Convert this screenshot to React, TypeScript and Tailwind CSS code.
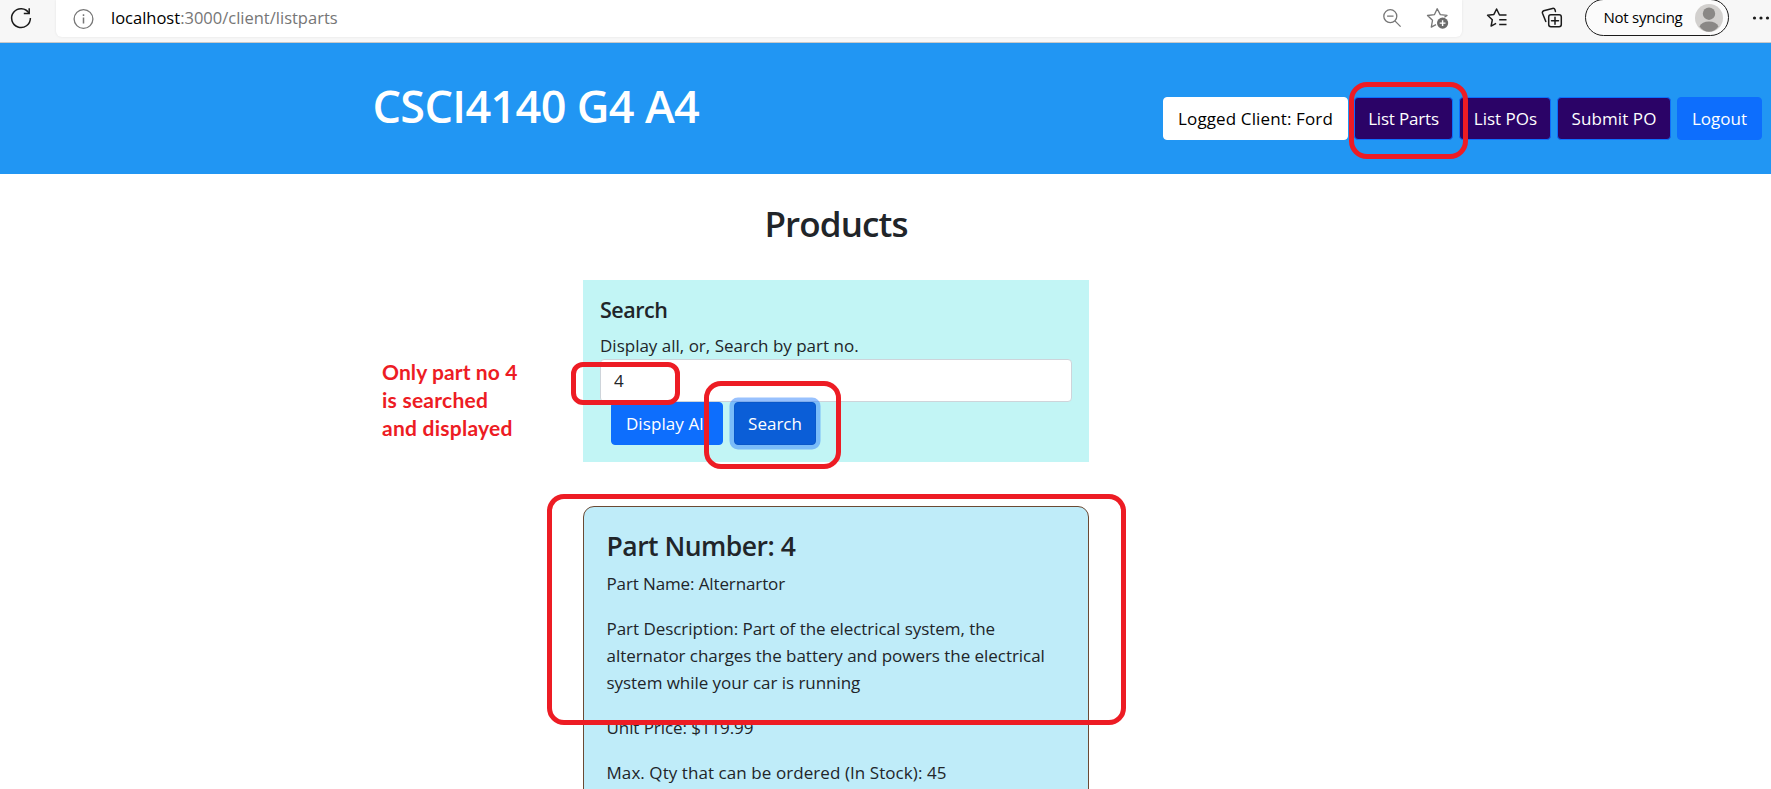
import type { ReactNode } from "react";

function RefreshIcon() {
  return (
    <svg width="24" height="24" viewBox="0 0 24 24" fill="none" stroke="#1b1b1b" strokeWidth="1.5" className="shrink-0">
      <path d="M20 7.2A9.4 9.4 0 1 0 21.4 12" />
      <path d="M20.2 2.2v5.2h-5.4" />
    </svg>
  );
}
function InfoIcon() {
  return (
    <svg width="22" height="22" viewBox="0 0 22 22" fill="none" stroke="#767676" strokeWidth="1.3" className="shrink-0">
      <circle cx="11.5" cy="11" r="9.4" />
      <path d="M11.5 9.6v6M11.5 6.3v1.6" strokeWidth="1.5" />
    </svg>
  );
}
function ZoomOutIcon() {
  return (
    <svg width="20" height="20" viewBox="0 0 20 20" fill="none" stroke="#767676" strokeWidth="1.3" className="shrink-0">
      <circle cx="7.3" cy="7.2" r="6.5" />
      <path d="M4.1 7.2h6.4M11.9 11.9l5.7 5.7" />
    </svg>
  );
}
function AddFavoriteIcon() {
  return (
    <svg width="24" height="24" viewBox="0 0 24 24" fill="none" stroke="#767676" strokeWidth="1.3" strokeLinejoin="round" className="shrink-0">
      <path d="M18.4 10.3l2.6-1.9-6.7-.8L11.2 1.7 8.5 7.6l-7 .9 5 4.8-1.2 6.8 4.7-2.5" />
      <circle cx="16.6" cy="16.1" r="5.6" fill="#6b6b6b" stroke="none" />
      <path d="M16.6 13.2v5.8M13.7 16.1h5.8" stroke="#fff" strokeWidth="1.4" />
    </svg>
  );
}
function FavoritesIcon() {
  return (
    <svg width="22" height="22" viewBox="0 0 22 22" fill="none" stroke="#1b1b1b" strokeWidth="1.5" strokeLinejoin="round" className="shrink-0">
      <path d="M20.5 8h-7L10.6 2 7.9 7.4l-6.3.9 4.7 4.5-1.2 6.3 5-2.7" />
      <path d="M13.2 12.7h7.3M13.2 17.4h7.3" />
    </svg>
  );
}
function CollectionsIcon() {
  return (
    <svg width="22" height="22" viewBox="0 0 22 22" fill="none" stroke="#1b1b1b" strokeWidth="1.5" strokeLinejoin="round" strokeLinecap="round" className="shrink-0">
      <rect x="7.7" y="7.7" width="12.6" height="12" rx="2.2" />
      <path d="M14 10.2v7M10.5 13.7h7" />
      <path d="M4.8 14.5 1.5 6.3Q.9 4.500 2.700 3.700L11.500 1.400Q13.400 1 14 2.800l.4 1.600" />
    </svg>
  );
}
function Avatar() {
  return (
    <svg width="28" height="28" viewBox="0 0 28 28" className="shrink-0">
      <circle cx="14" cy="14" r="14" fill="#d2d0ce" />
      <circle cx="14" cy="9.7" r="6.2" fill="#8a8886" />
      <path d="M4.500 22.500Q7 17.500 14 17.500t9.500 5Q19.500 27.800 14 27.800T4.500 22.500z" fill="#8a8886" />
    </svg>
  );
}
function MoreIcon() {
  return (
    <svg width="18" height="6" viewBox="0 0 18 6" fill="#1b1b1b" className="shrink-0">
      <circle cx="2.5" cy="3" r="1.6" />
      <circle cx="9" cy="3" r="1.6" />
      <circle cx="15.5" cy="3" r="1.6" />
    </svg>
  );
}

function Button({ children, className }: { children: ReactNode; className: string }) {
  return (
    <button className={"flex h-[43px] shrink-0 items-center justify-center rounded-[4px] border text-[17px] whitespace-nowrap " + className}>
      {children}
    </button>
  );
}

export default function App() {
  return (
    <div className="relative h-[789px] w-[1771px] overflow-hidden bg-white font-['Open_Sans',sans-serif] text-[17px] text-[#212529]">
      <div className="flex h-[43px] items-start border-b border-[#c9c9c9] bg-[#f7f7f7] pl-[9px]">
        <div className="mt-[6px] flex"><RefreshIcon /></div>
        <div className="ml-[23px] flex h-[37px] w-[1406px] shrink-0 items-center rounded-b-[6px] bg-white pl-[16px] pr-[12px] shadow-[0_0_3px_rgba(0,0,0,0.08)]">
          <InfoIcon />
          <div className="ml-[17px] flex-1 pb-px text-[16.5px] whitespace-nowrap text-[#767676]"><span className="text-black">localhost</span>:3000/client/listparts</div>
          <ZoomOutIcon />
          <div className="ml-[23px] flex"><AddFavoriteIcon /></div>
        </div>
        <div className="ml-[24px] mt-[7px] flex"><FavoritesIcon /></div>
        <div className="ml-[33px] mt-[7px] flex"><CollectionsIcon /></div>
        <div className="ml-[22px] mt-[-1px] flex h-[37px] w-[144px] shrink-0 items-center rounded-full border-[1.5px] border-[#1b1b1b] bg-[#fbfbfb] pl-[17.5px] text-[15px] tracking-[-0.25px] whitespace-nowrap text-black">
          Not syncing
          <div className="ml-auto mr-[5px] flex"><Avatar /></div>
        </div>
        <div className="ml-[23px] mt-[15px] flex"><MoreIcon /></div>
      </div>

      <header className="flex h-[131px] items-start bg-[#2196f3] pr-[9px]">
        <h1 className="ml-[372.5px] mt-[36px] text-[45px] leading-[54px] font-semibold tracking-[-0.65px] whitespace-nowrap text-white">CSCI4140 G4 A4</h1>
        <nav className="ml-auto mt-[54px] flex text-white">
          <Button className="w-[185px] border-white bg-white tracking-[0.13px] text-black">Logged Client: Ford</Button>
          <Button className="ml-[6px] w-[99px] border-[#0d6efd] bg-[#2b0367] tracking-[-0.18px]">List Parts</Button>
          <Button className="ml-[6px] w-[92px] border-[#0d6efd] bg-[#2b0367] pl-px">List POs</Button>
          <Button className="ml-[6px] w-[114px] border-[#0d6efd] bg-[#2b0367] tracking-[0.1px]">Submit PO</Button>
          <Button className="ml-[6px] w-[85px] border-[#0d6efd] bg-[#0d6efd]">Logout</Button>
        </nav>
      </header>

      <main className="ml-[583px] w-[506px]">
        <h2 className="pt-[28px] text-center text-[35px] leading-[43px] font-semibold tracking-[-0.9px]">Products</h2>
        <section className="mt-[35px] h-[182px] bg-[#c2f5f5] px-[17px] pt-[16px]">
          <h5 className="text-[21.5px] leading-[27px] font-semibold tracking-[-0.5px]">Search</h5>
          <p className="mt-[9px] leading-[27px]">Display all, or, Search by part no.</p>
          <div className="flex h-[43px] items-center rounded-[4px] border border-[#ced4da] bg-white pl-[13px]">4</div>
          <div className="ml-[11px] flex text-white">
            <Button className="w-[112px] border-[#0d6efd] bg-[#0d6efd] tracking-[0.1px]">Display All</Button>
            <Button className="ml-[11px] w-[82px] border-[#0a58ca] bg-[#0b5ed7] ring-[4.5px] ring-[#3184fd]/50">Search</Button>
          </div>
        </section>
        <section className="mt-[44px] h-[400px] rounded-[11px] border border-[#6b4a34] bg-[#bfecf9] px-[22.5px] pt-[23px] leading-[27px] whitespace-nowrap">
          <h4 className="text-[26.5px] leading-[32px] font-semibold tracking-[-0.5px]">Part Number: 4</h4>
          <p className="mt-[8px] tracking-[-0.12px]">Part Name: Alternartor</p>
          <p className="mt-[18px] tracking-[-0.04px]">
            Part Description: Part of the electrical system, the<br />
            alternator charges the battery and powers the electrical<br />
            system while your car is running
          </p>
          <p className="mt-[18px] tracking-[-0.08px]">Unit Price: $119.99</p>
          <p className="mt-[18px] tracking-[0.07px]">Max. Qty that can be ordered (In Stock): 45</p>
        </section>
      </main>

      <p className="absolute left-[382px] top-[358px] font-['Lato',sans-serif] text-[21px] leading-[28px] font-bold tracking-[0.1px] whitespace-nowrap text-[#ed1c24]">
        Only part no 4<br /><span className="tracking-[0.25px]">is searched<br />and displayed</span>
      </p>
      <div className="absolute left-[1349px] top-[82px] h-[77px] w-[119px] rounded-[18px] border-[5px] border-[#ed1c24]" />
      <div className="absolute left-[571px] top-[362px] h-[43px] w-[109px] rounded-[12px] border-[5px] border-[#ed1c24]" />
      <div className="absolute left-[704px] top-[381px] h-[88px] w-[137px] rounded-[17px] border-[5px] border-[#ed1c24]" />
      <div className="absolute left-[547px] top-[494px] h-[231px] w-[579px] rounded-[17px] border-[5px] border-[#ed1c24]" />
    </div>
  );
}
